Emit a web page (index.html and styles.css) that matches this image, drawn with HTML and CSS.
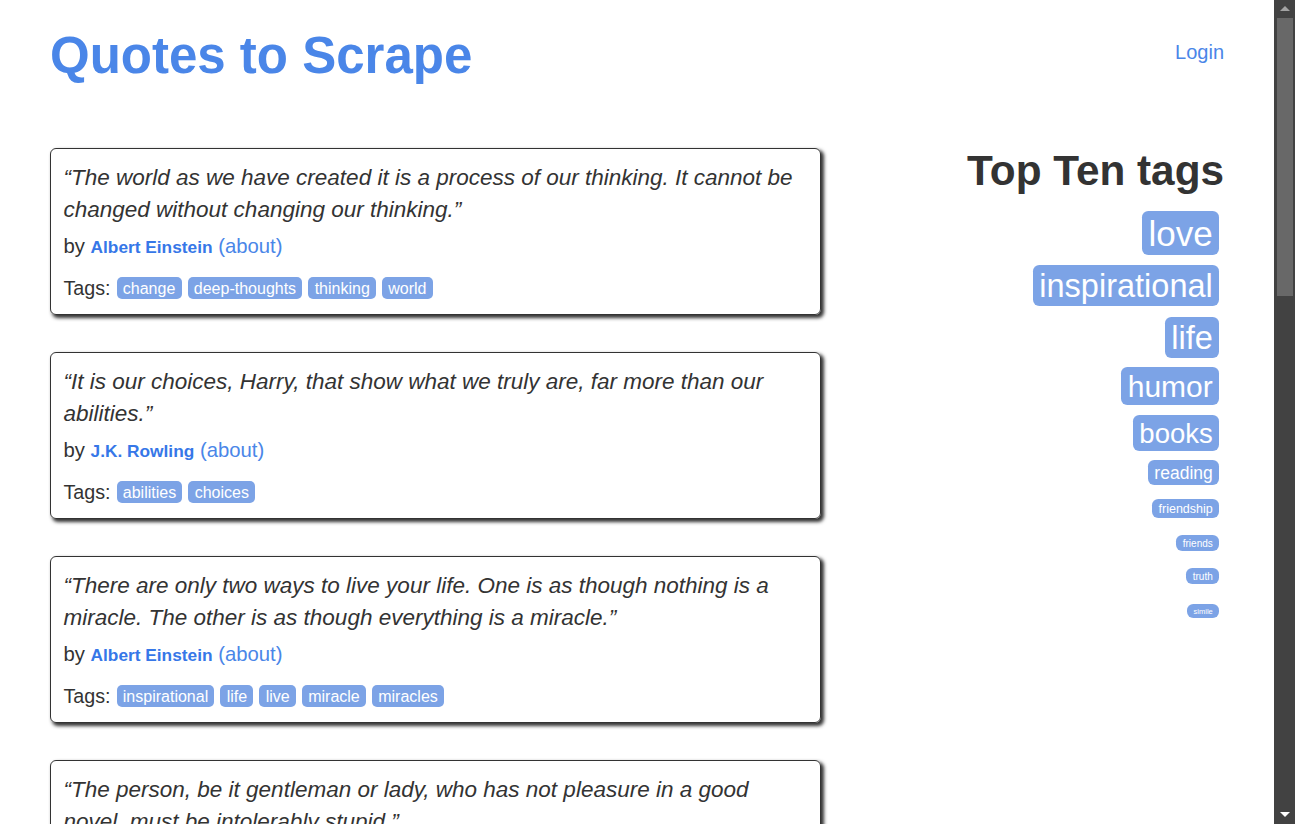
FILE: index.html
```html
<!DOCTYPE html>
<html lang="en">
<head>
<meta charset="utf-8">
<title>Quotes to Scrape</title>
<link rel="stylesheet" href="styles.css">
</head>
<body>
<div class="viewport">
  <div class="page">
    <div class="container">
      <header class="header-box">
        <h1 class="title"><a href="#">Quotes to Scrape</a></h1>
        <p class="login"><a href="#">Login</a></p>
      </header>
      <div class="main">
        <div class="quotes">
          <div class="quote">
            <span class="text">“The world as we have created it is a process of our thinking. It cannot be changed without changing our thinking.”</span>
            <span class="by">by <small class="author">Albert Einstein</small> <a href="#">(about)</a></span>
            <div class="tags">Tags: <a class="tag" href="#">change</a><a class="tag" href="#">deep-thoughts</a><a class="tag" href="#">thinking</a><a class="tag" href="#">world</a></div>
          </div>
          <div class="quote">
            <span class="text">“It is our choices, Harry, that show what we truly are, far more than our abilities.”</span>
            <span class="by">by <small class="author">J.K. Rowling</small> <a href="#">(about)</a></span>
            <div class="tags">Tags: <a class="tag" href="#">abilities</a><a class="tag" href="#">choices</a></div>
          </div>
          <div class="quote">
            <span class="text">“There are only two ways to live your life. One is as though nothing is a miracle. The other is as though everything is a miracle.”</span>
            <span class="by">by <small class="author">Albert Einstein</small> <a href="#">(about)</a></span>
            <div class="tags">Tags: <a class="tag" href="#">inspirational</a><a class="tag" href="#">life</a><a class="tag" href="#">live</a><a class="tag" href="#">miracle</a><a class="tag" href="#">miracles</a></div>
          </div>
          <div class="quote">
            <span class="text">“The person, be it gentleman or lady, who has not pleasure in a good novel, must be intolerably stupid.”</span>
            <span class="by">by <small class="author">Jane Austen</small> <a href="#">(about)</a></span>
            <div class="tags">Tags: <a class="tag" href="#">aliteracy</a><a class="tag" href="#">books</a><a class="tag" href="#">classic</a><a class="tag" href="#">humor</a></div>
          </div>
        </div>
        <aside class="tags-box">
          <h2>Top Ten tags</h2>
          <span class="tag-item"><a class="cloud s28" href="#">love</a></span>
          <span class="tag-item"><a class="cloud s26" href="#">inspirational</a></span>
          <span class="tag-item"><a class="cloud s26" href="#">life</a></span>
          <span class="tag-item"><a class="cloud s24" href="#">humor</a></span>
          <span class="tag-item"><a class="cloud s22" href="#">books</a></span>
          <span class="tag-item"><a class="cloud s14" href="#">reading</a></span>
          <span class="tag-item"><a class="cloud s10" href="#">friendship</a></span>
          <span class="tag-item"><a class="cloud s8" href="#">friends</a></span>
          <span class="tag-item"><a class="cloud s8" href="#">truth</a></span>
          <span class="tag-item"><a class="cloud s6" href="#">simile</a></span>
        </aside>
      </div>
    </div>
  </div>
  <div class="scrollbar">
    <div class="arrow-up"></div>
    <div class="thumb"></div>
    <div class="track"></div>
    <div class="arrow-down"></div>
  </div>
</div>
</body>
</html>
```
FILE: styles.css
```css
* { box-sizing: border-box; }
html, body { margin: 0; padding: 0; }
body {
  font-family: "Liberation Sans", Arial, Helvetica, sans-serif;
  font-size: 20px;
  line-height: 1.42857;
  color: #333;
  background: #fff;
}
a { text-decoration: none; color: #4a86e8; }

.viewport { display: flex; height: 824px; overflow: hidden; }
.page { flex: 1; height: 824px; overflow: hidden; }
.container { width: 1174px; margin: 0 auto; }

.header-box {
  display: flex;
  justify-content: space-between;
  align-items: flex-start;
  padding: 27px 0 64px;
}
.title { margin: 0; font-size: 51px; line-height: 57px; font-weight: bold; }
.title a { color: #4a86e8; }
.login { margin: 11px 0 0; font-size: 20px; line-height: 28px; }

.main {
  display: grid;
  grid-template-columns: 771px 1fr;
  column-gap: 37px;
  align-items: start;
}

.quote {
  border: 1px solid #333;
  border-radius: 6px;
  box-shadow: 2.5px 2.5px 3.75px #333;
  padding: 12.5px;
  margin-bottom: 37px;
}
.quote .text {
  display: block;
  font-size: 22.5px;
  line-height: 32.14px;
  font-style: italic;
  margin-bottom: 6.25px;
}
.quote .by { display: block; font-size: 20.3px; line-height: 28.6px; }
.quote .author { font-size: 17.3px; font-weight: bold; color: #3677e8; }
.quote .by a { color: #4a86e8; }

.tags {
  display: flex;
  align-items: center;
  gap: 6px;
  margin-top: 13px;
  font-size: 19.7px;
  line-height: 27px;
}
.tag {
  display: inline-block;
  background: #7ca3e6;
  color: #fff;
  font-size: 16px;
  line-height: 17px;
  padding: 2.5px 6.25px;
  border-radius: 5px;
}

.tags-box { text-align: right; }
.tags-box h2 {
  margin: 0 0 14px;
  font-size: 42.3px;
  line-height: 46px;
  font-weight: bold;
  color: #333;
}
.tag-item { display: block; margin: 5px; font-size: 20px; line-height: 1.42857; }
.cloud {
  background: #7ca3e6;
  color: #fff;
  padding: 2.5px 6.25px;
  border-radius: 6.25px;
  line-height: 1.42857;
}
.s28 { font-size: 35px; }
.s26 { font-size: 32.5px; }
.s24 { font-size: 30px; }
.s22 { font-size: 27.5px; }
.s14 { font-size: 17.5px; }
.s10 { font-size: 12.5px; }
.s8 { font-size: 10px; }
.s6 { font-size: 7.5px; }

.scrollbar {
  width: 21px;
  flex: none;
  background: #424242;
  display: flex;
  flex-direction: column;
  align-items: center;
}
.arrow-up {
  margin-top: 6px;
  width: 0; height: 0;
  border-left: 5px solid transparent;
  border-right: 5px solid transparent;
  border-bottom: 5px solid #a3a3a3;
}
.thumb {
  margin-top: 7px;
  width: 16px;
  height: 278px;
  background: #686868;
}
.track { flex: 1; }
.arrow-down {
  margin-bottom: 7px;
  width: 0; height: 0;
  border-left: 5px solid transparent;
  border-right: 5px solid transparent;
  border-top: 5px solid #ffffff;
}
```
